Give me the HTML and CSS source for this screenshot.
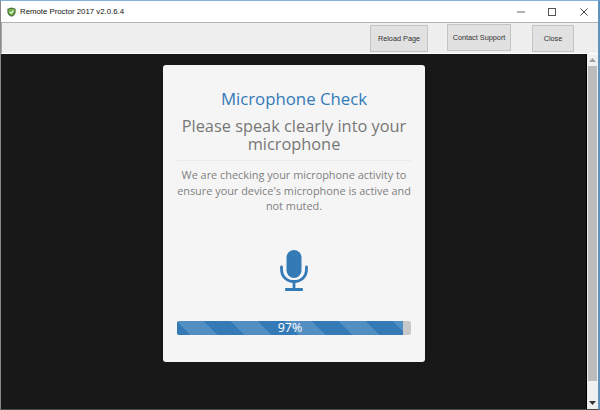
FILE: index.html
```html
<!DOCTYPE html>
<html lang="en">
<head>
<meta charset="utf-8">
<title>Remote Proctor 2017</title>
<link rel="stylesheet" href="styles.css">
</head>
<body>
<div class="window">
  <header class="titlebar">
    <svg class="app-icon" viewBox="0 0 12 13" width="9" height="10" aria-hidden="true">
      <path d="M6 .5 11.500 2.200V6.500C11.500 9.600 9 11.700 6 12.700 3 11.700.5 9.600.5 6.500V2.200Z" fill="#4f6f45"/>
      <path d="M6 2 10 3.200V6.500C10 8.600 8.200 10.200 6 11 3.800 10.200 2 8.600 2 6.500V3.200Z" fill="#6fb53f"/>
      <path d="M3.600 6.200 5.500 8.200 8.700 4.400" fill="none" stroke="#fff" stroke-width="1.500"/>
    </svg>
    <span class="title">Remote Proctor 2017 v2.0.6.4</span>
    <div class="controls">
      <svg class="ctl ctl-min" viewBox="0 0 8 8" width="8" height="8" aria-hidden="true"><path d="M0 4H8" stroke="#888" stroke-width="1.300"/></svg>
      <svg class="ctl ctl-max" viewBox="0 0 8 8" width="8" height="8" aria-hidden="true"><rect x=".5" y=".5" width="7" height="7" fill="none" stroke="#555" stroke-width="1"/></svg>
      <svg class="ctl ctl-close" viewBox="0 0 8 8" width="8" height="8" aria-hidden="true"><path d="M.5.5 7.500 7.500M7.500.5.5 7.500" stroke="#444" stroke-width="1"/></svg>
    </div>
  </header>
  <nav class="toolbar">
    <button class="btn btn-reload">Reload Page</button>
    <button class="btn btn-support">Contact Support</button>
    <button class="btn btn-close">Close</button>
  </nav>
  <div class="viewport">
    <main class="stage">
      <section class="card">
        <h1 class="heading">Microphone Check</h1>
        <h2 class="subheading">Please speak clearly into your microphone</h2>
        <hr class="rule">
        <p class="copy">We are checking your microphone activity to ensure your device's microphone is active and not muted.</p>
        <svg class="mic" viewBox="0 0 28 41" width="28" height="41" aria-hidden="true">
          <rect x="6.500" y="0" width="15" height="28" rx="7.500" fill="#337ab7"/>
          <path d="M1.500 17V19C1.500 27 7 31.500 14 31.500S26.500 27 26.500 19V17" fill="none" stroke="#337ab7" stroke-width="2.800" stroke-linecap="round"/>
          <path d="M14 32V39" stroke="#337ab7" stroke-width="2.800"/>
          <rect x="5" y="38" width="18" height="3" rx="1" fill="#337ab7"/>
        </svg>
        <div class="progress">
          <div class="bar" style="width: 96.6%"><span class="pct">97%</span></div>
        </div>
      </section>
    </main>
    <aside class="scrollbar">
      <svg class="arrow" viewBox="0 0 7 4" width="7" height="4" aria-hidden="true"><path d="M3.500 0 7 4H0Z" fill="#a0a0a0"/></svg>
      <div class="thumb"></div>
      <div class="track"></div>
      <svg class="arrow" viewBox="0 0 7 4" width="7" height="4" aria-hidden="true"><path d="M0 0H7L3.500 4Z" fill="#333"/></svg>
    </aside>
  </div>
</div>
</body>
</html>
```
FILE: styles.css
```css
* { box-sizing: border-box; }
html, body { margin: 0; padding: 0; }
body { width: 600px; height: 410px; overflow: hidden; background: #fff; }
.window {
  width: 600px; height: 410px; display: flex; flex-direction: column;
  border-style: solid; border-width: 1px 2px 1px 1px;
  border-color: #7fb2dc #5e93bd #4a4a4a #888;
  font-family: "Liberation Sans", Arial, sans-serif;
}
.titlebar {
  height: 22px; flex: none; display: flex; align-items: center; background: #fff;
  padding-left: 6px; border-bottom: 1px solid #b4b4b4;
}
.app-icon { flex: none; }
.title { margin-left: 4px; font: 7.800px "Liberation Sans", sans-serif; color: #111; }
.controls { margin-left: auto; display: flex; align-items: center; padding-right: 10px; }
.ctl { display: block; }
.ctl-max { margin-left: 23px; }
.ctl-close { margin-left: 24px; }
.toolbar {
  height: 31px; flex: none; display: flex; align-items: flex-start; background: #eeeeee;
  border-left: 1px solid #a8a8a8; border-bottom: 1px solid #fff;
}
.btn {
  padding: 0; background: #e1e1e1; border: 1px solid #c4c4c4; color: #333;
  font: 7.300px "Liberation Sans", sans-serif; text-align: center;
}
.btn-reload { width: 58px; height: 27px; margin: 2px 0 0 368px; }
.btn-support { width: 64px; height: 27px; margin: 1px 0 0 19px; }
.btn-close { width: 42px; height: 27px; margin: 2px 0 0 21px; }
.viewport { flex: 1; min-height: 0; display: flex; }
.stage { flex: 1; background: #181818; padding: 11px 0 0 162px; border-right: 1px solid #000; }
.card {
  width: 262px; height: 297px; background: #f5f5f5; border-radius: 3px;
  padding: 24px 14px 0; display: flex; flex-direction: column; align-items: center; text-align: center;
  font-family: "Open Sans", sans-serif;
}
.heading { margin: 0; font-size: 16.800px; font-weight: 400; line-height: 20px; color: #337ab7; }
.subheading { margin: 8px 0 0; font-size: 16.350px; font-weight: 400; line-height: 18px; color: #777; width: 234px; }
.rule { width: 234px; margin: 7px 0 0; border: 0; border-top: 1px solid #eaeaea; }
.copy { margin: 6px -4px 0; font-size: 10.900px; line-height: 15.500px; color: #7f7f7f; }
.mic { margin-top: 36px; flex: none; }
.progress { width: 234px; height: 14px; margin-top: 30px; background: #c8c8c8; border-radius: 2px; flex: none; }
.bar {
  height: 100%; text-align: center; border-radius: 2px 0 0 2px;
  background-color: #337ab7;
  background-image: linear-gradient(45deg, rgba(255,255,255,.15) 25%, transparent 25%, transparent 50%, rgba(255,255,255,.15) 50%, rgba(255,255,255,.15) 75%, transparent 75%);
  background-size: 54px 54px;
}
.pct { display: block; font-size: 12.500px; line-height: 14px; color: #fff; }
.scrollbar { width: 11px; flex: none; background: #f0f0f0; display: flex; flex-direction: column; align-items: center; }
.arrow { flex: none; margin: 4px 0; }
.thumb { width: 9px; height: 315px; background: #bcbcbc; }
.track { flex: 1; }
```
